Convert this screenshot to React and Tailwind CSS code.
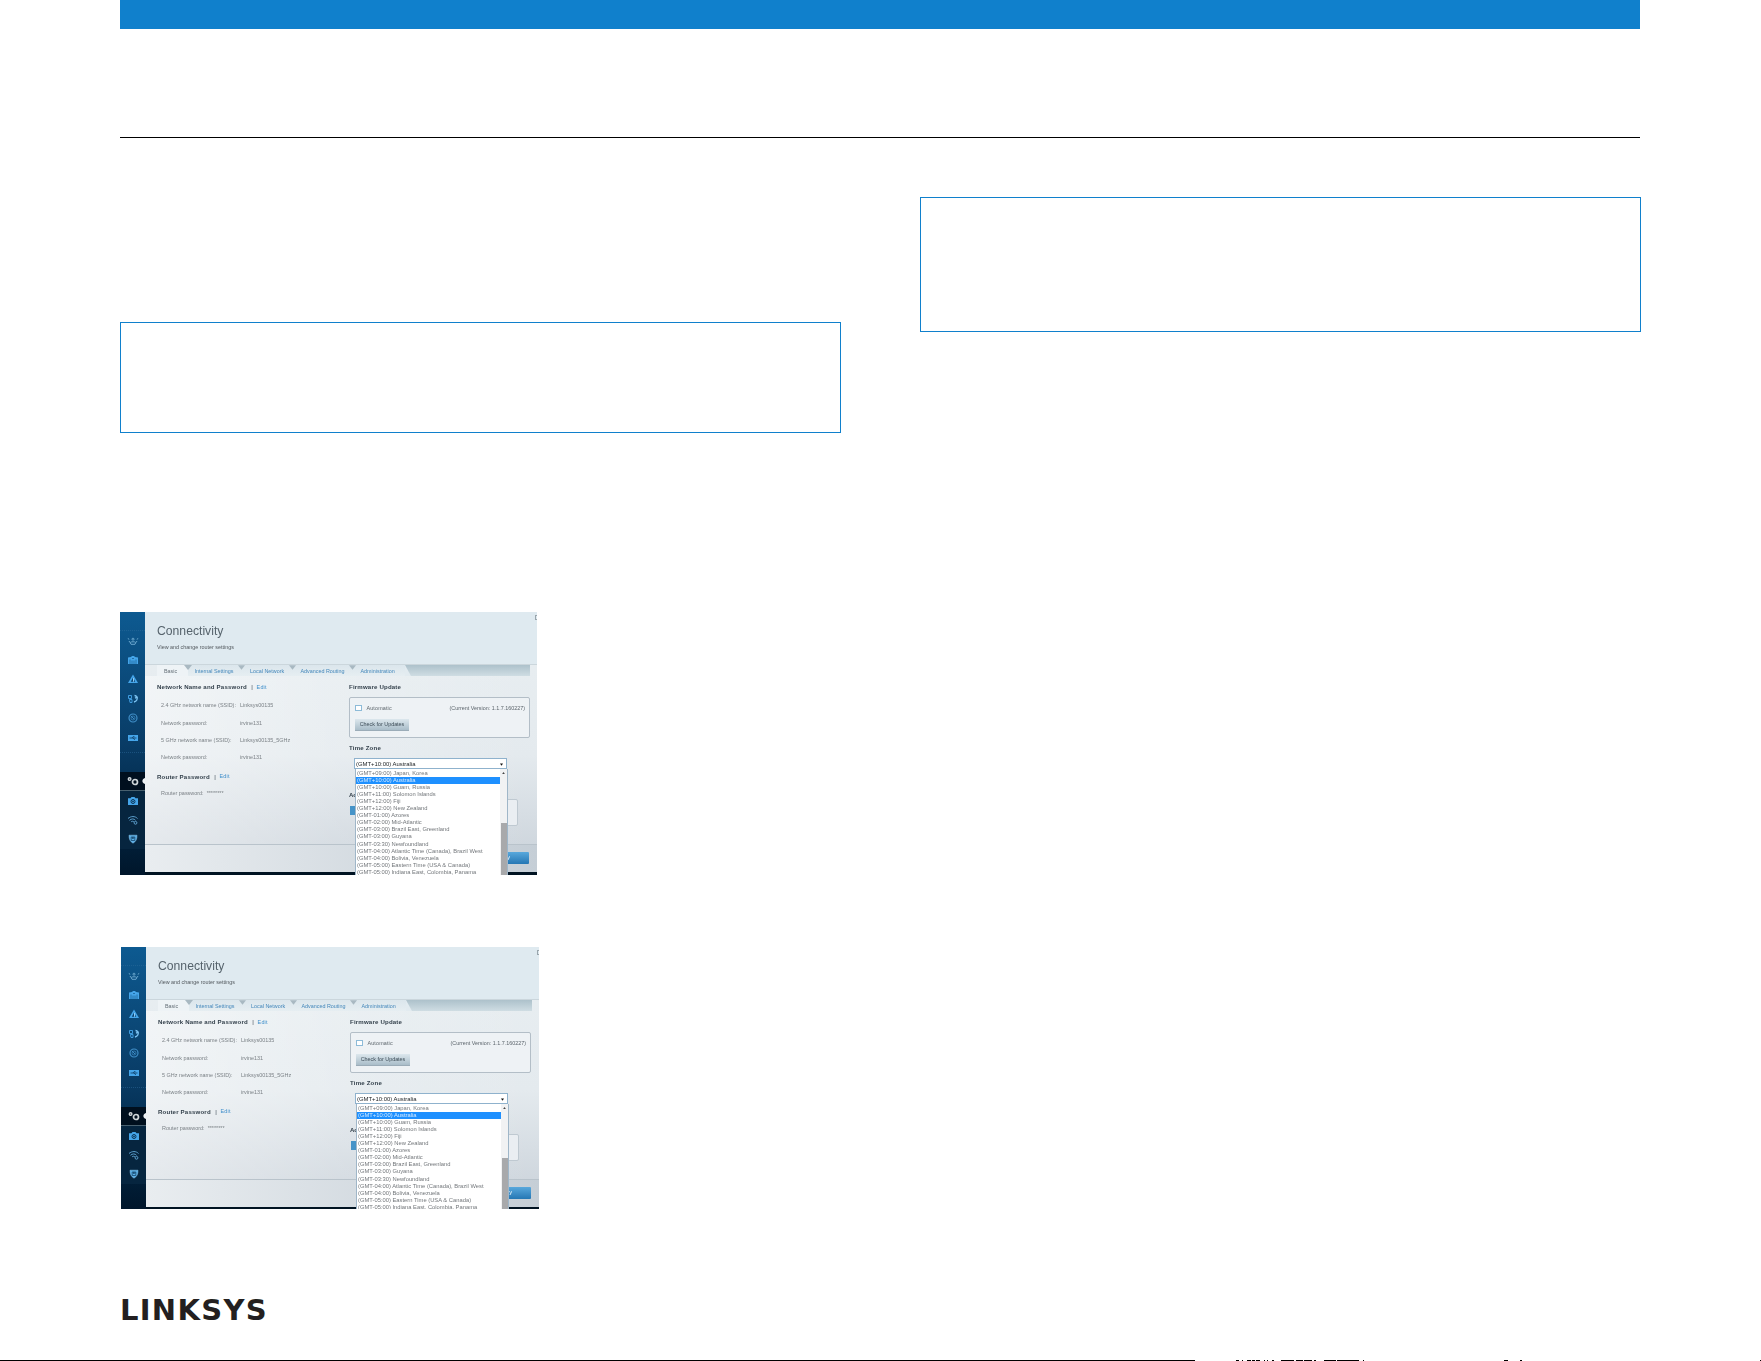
import React from 'react';

const tabs = [
  { label: 'Internal Settings', width: 'w-[54px]', pad: 'pl-[6.5px]' },
  { label: 'Local Network', width: 'w-[51px]', pad: 'pl-[8px]' },
  { label: 'Advanced Routing', width: 'w-[60px]', pad: 'pl-[7.5px]' },
  { label: 'Administration', width: 'w-[52px]', pad: 'pl-[7.5px]' }
];

const networkRows = [
  ['2.4 GHz network name (SSID):', 'Linksys00135'],
  ['Network password:', 'irvine131'],
  ['5 GHz network name (SSID):', 'Linksys00135_5GHz'],
  ['Network password:', 'irvine131']
];

const zones = [
  '(GMT+09:00) Japan, Korea',
  '(GMT+10:00) Australia',
  '(GMT+10:00) Guam, Russia',
  '(GMT+11:00) Solomon Islands',
  '(GMT+12:00) Fiji',
  '(GMT+12:00) New Zealand',
  '(GMT-01:00) Azores',
  '(GMT-02:00) Mid-Atlantic',
  '(GMT-03:00) Brazil East, Greenland',
  '(GMT-03:00) Guyana',
  '(GMT-03:30) Newfoundland',
  '(GMT-04:00) Atlantic Time (Canada), Brazil West',
  '(GMT-04:00) Bolivia, Venezuela',
  '(GMT-05:00) Eastern Time (USA & Canada)',
  '(GMT-05:00) Indiana East, Colombia, Panama'
];

const Icon = ({ children }) => (
  <svg viewBox="0 0 12 12" className="w-[12px] h-[12px]" fill="none" stroke="#45a5ea" strokeWidth="1">
    {children}
  </svg>
);

const topIcons = [
  // Device list
  <g stroke="#6aa6cd">
    <path d="M3.200 7.500c1-1 4.600-1 5.600 0L8 9.300H4z" />
    <circle cx="6" cy="4.200" r="1" />
    <path d="M.8 3.500l1.400.8M11.200 3.500l-1.400.8M2 6l1 1.500M10 6l-1 1.500" />
  </g>,
  // Guest access
  <g fill="#45a5ea" stroke="none">
    <path d="M1 3.500L4 3l1-1h2l1 1 3 .500V10H1z" />
    <path d="M3 5.500V10M9 5.500V10M5 4.500h2M5 6.500V10M7 6.500V10" stroke="#0c4a7b" strokeWidth=".6" />
  </g>,
  // Parental controls
  <g fill="#45a5ea" stroke="none">
    <path d="M6 1.500L11 10H1z" />
    <path d="M6 4.500L8.200 8.700H3.800z" fill="#0b426f" />
    <path d="M6.500 5v3.700" stroke="#8ccaf5" />
  </g>,
  // Media prioritization
  <g>
    <path d="M1.500 2.500h3v3h-3zM2.500 6.500h2.500v3H3z" strokeWidth=".9" />
    <path d="M7.500 2.500c2.500 0 2.500 2 .5 2.500M10 3.500c1 2.500-.5 5-3 5.500" stroke="#7cc3f2" strokeWidth="1.400" />
  </g>,
  // Speed test
  <g stroke="#3e8dc6">
    <circle cx="6" cy="6" r="4" strokeWidth="1.200" />
    <circle cx="6" cy="6" r="2" strokeWidth=".7" />
    <path d="M7 7L4 4" />
  </g>,
  // External storage
  <g>
    <path d="M1 3h10v6H1z" fill="#45a5ea" stroke="none" />
    <path d="M2.500 6h7M5 6l1-1.300h1.500M6 6l1 1.300h1" stroke="#0a3b63" strokeWidth=".8" />
  </g>
];

const bottomIcons = [
  // Troubleshooting
  <g>
    <path d="M1 3.300h2.500L4.500 2h3l1 1.300H11V10H1z" fill="#45a5ea" stroke="none" />
    <circle cx="6" cy="6.500" r="2" stroke="#0a3558" />
    <path d="M6 5.500v2M5 6.500h2" stroke="#0a3558" strokeWidth=".7" />
  </g>,
  // Wireless
  <g stroke="#5c9fcd">
    <path d="M1 4.500c3-2.600 7-2.600 9.500 0M2.500 6.300c2-1.800 4.500-1.800 6 0M4 8c1-1 2-1 3 0" />
    <circle cx="8.500" cy="8.800" r="1.400" />
  </g>,
  // Security
  <g>
    <path d="M2 2.200c3 0 5 0 8 0 0 4-1 6.300-4 8-3-1.700-4-4-4-8z" fill="#5aaee6" stroke="#86c4ec" strokeWidth=".5" />
    <path d="M4.200 4h3.600v3.500H4.200zM5.500 4v2M6.700 4v2" stroke="#0d3a5d" strokeWidth=".7" />
  </g>
];

const Sidebar = () => (
  <aside className="w-[24.5px] shrink-0 flex flex-col bg-gradient-to-b from-[#0d5a91] via-[#093c66] via-50% to-[#00162b]">
    <div className="h-[19px] shrink-0 border-b border-dotted border-[#2c6c9c]/50" />
    {topIcons.map((icon, i) => (
      <div key={i} className="h-[19.4px] pl-[1px] shrink-0 flex items-center justify-center">
        <Icon>{icon}</Icon>
      </div>
    ))}
    <div className="h-[6px] shrink-0 border-b border-dotted border-[#2c6c9c]/50" />
    <div className="h-[18.6px] shrink-0" />
    {/* Active entry with the notch pointing out of the panel */}
    <div className="h-[19px] pl-[1px] shrink-0 flex items-center justify-center relative bg-[#000f1e] border-b border-[#48606f]">
      <svg viewBox="0 0 12 12" className="w-[12px] h-[12px]" fill="none" stroke="#cfd6da">
        <circle cx="2.600" cy="4" r="1.300" strokeWidth="1.400" />
        <circle cx="8" cy="7" r="2.500" strokeWidth="1.700" />
      </svg>
      <svg viewBox="0 0 3 6" className="absolute right-0 top-[6px] w-[3px] h-[6px]">
        <path d="M3 0v6C-.5 5-.5 1 3 0z" fill="#eef2f5" />
      </svg>
    </div>
    <div className="bg-[#06253f] shrink-0">
      {bottomIcons.map((icon, i) => (
        <div key={i} className="h-[19.3px] pl-[1px] flex items-center justify-center">
          <Icon>{icon}</Icon>
        </div>
      ))}
    </div>
  </aside>
);

const TabBar = () => (
  <nav className="mr-[7px] ml-[12.5px] h-[11px] shrink-0 flex text-[5.4px] leading-[12px] text-[#4588bb] bg-gradient-to-b from-[#adc1cb] to-[#cfdde3]">
    <div className="relative w-[31px] bg-[#eef3f6] pl-[7px] text-[#667078]">
      Basic
      <svg viewBox="0 0 8 5" className="absolute right-[-4px] top-0 w-[8px] h-[5px] z-10">
        <path d="M0 0h8L4 5z" fill="#a9b9c2" />
      </svg>
    </div>
    {tabs.map((tab, i) => (
      <div key={tab.label} className={`relative ${tab.width} ${tab.pad} whitespace-nowrap bg-gradient-to-b from-[#dbe6ec] to-[#e6eef2]`}>
        {tab.label}
        {i < 3 ? (
          <svg viewBox="0 0 8 5" className="absolute right-[-3px] top-0 w-[7px] h-[5px] z-10">
            <path d="M0 0h8L4 5z" fill="#a9b9c2" />
          </svg>
        ) : (
          <svg viewBox="0 0 6 11" className="absolute right-[-6px] top-0 w-[6px] h-[11px]">
            <path d="M0 0l6 11H0z" fill="#e2ebf0" />
          </svg>
        )}
      </div>
    ))}
  </nav>
);

const Heading = ({ children, edit }) => (
  <h3 className="h-[20px] flex items-center text-[6.1px] tracking-[0.18px] font-bold text-[#34414c] whitespace-nowrap">
    {children}
    {edit && (
      <>
        <span className="font-normal ml-[4.5px] mr-[3.5px]">|</span>
        <span className="font-normal text-[5.4px] text-[#3f8fcb]">Edit</span>
      </>
    )}
  </h3>
);

const TimeZoneMenu = () => (
  <div className="absolute left-0 top-[10px] w-[153px] h-[106px] bg-white border-x border-[#9fb6c8] overflow-hidden z-20 flex">
    <ul className="flex-1 pt-[0.6px] text-[5.8px] leading-[7.1px] text-[#73777b] whitespace-nowrap">
      {zones.map((zone, i) => (
        <li key={zone} className={i === 1 ? 'pl-[1px] bg-[#1e90ff] text-[#d6ebff]' : 'pl-[1px]'}>
          {zone}
        </li>
      ))}
    </ul>
    <div className="w-[7px] bg-[#f1f2f3] flex flex-col items-center">
      <svg viewBox="0 0 4 3" className="mt-[3px] w-[3px] h-[2px]">
        <path d="M2 0l2 3H0z" fill="#444" />
      </svg>
      <div className="mt-[49px] w-[6px] flex-1 bg-[#a8a9ab]" />
    </div>
  </div>
);

const RouterPanel = ({ size }) => (
  <div className={`${size} flex overflow-hidden bg-[#001322] blur-[0.3px]`}>
    <Sidebar />
    <div className="flex-1 h-[260px] flex flex-col bg-gradient-to-b from-[#e9eff2] via-[#e4eaee] via-55% to-[#c9d1d9]">
      <header className="h-[53px] shrink-0 pl-[12.5px] flex bg-[#dfeaf0] border-b border-[#cbd6dc]">
        <div className="flex-1">
          <h2 className="mt-[12px] text-[12.2px] leading-[14px] text-[#56636c]">Connectivity</h2>
          <p className="mt-[6px] text-[5.4px] leading-[7px] text-[#53595e]">View and change router settings</p>
        </div>
        <div className="mt-[3px] w-[2px] h-[5px] border border-r-0 border-[#9aa6ad]" />
      </header>
      <TabBar />
      <div className="flex-1 flex pl-[12.5px] bg-gradient-to-r from-white/45 via-white/15 to-transparent">
        <div className="w-[192px] pt-[1px]">
          <Heading edit>Network Name and Password</Heading>
          <div className="text-[5.45px] text-[#7b8186]">
            {networkRows.map(([label, value], i) => (
              <div key={i} className="h-[17.1px] flex items-center pl-[4px]">
                <span className="w-[79px]">{label}</span>
                <span>{value}</span>
              </div>
            ))}
          </div>
          <div className="h-[1px]" />
          <Heading edit>Router Password</Heading>
          <div className="mt-[-2px] h-[17px] flex items-center pl-[4px] text-[5.45px] text-[#7b8186]">
            Router password: <span className="ml-[3px] pt-[1px]">********</span>
          </div>
        </div>
        <div className="w-[181px] pt-[1px]">
          <Heading>Firmware Update</Heading>
          <div className="h-[41px] px-[5px] rounded-[2px] border border-[#b3bec7] bg-[#eef2f5]">
            <div className="mt-[5px] h-[10px] flex items-center text-[5.4px] text-[#5c656c]">
              <span className="w-[7px] h-[6px] mr-[4.5px] border border-[#8dbbd8] bg-white" />
              <span className="tracking-[0.14px]">Automatic</span>
              <span className="ml-auto mr-[-1px]">(Current Version: 1.1.7.160227)</span>
            </div>
            <div className="mt-[6px] w-[54px] h-[12px] flex items-center justify-center text-[5.4px] text-[#3f4e59] bg-gradient-to-b from-[#dce7ed] to-[#a9bdc9] border-b border-[#9bacb8]">
              Check for Updates
            </div>
          </div>
          <Heading>Time Zone</Heading>
          <div className="relative ml-[5px] w-[153px] h-[11px] pt-[1px] flex items-center justify-between pl-[1px] pr-[3px] bg-white border border-[#8fb2cd] text-[5.9px] text-[#222629]">
            <span>(GMT+10:00) Australia</span>
            <svg viewBox="0 0 4 3" className="w-[3px] h-[3px]">
              <path d="M0 0h4L2 3z" fill="#111" />
            </svg>
            <TimeZoneMenu />
          </div>
          {/* Administration shortcuts, mostly hidden by the open menu */}
          <div className="mt-[20px] w-[169px] flex">
            <div className="w-[20px]">
              <div className="text-[6px] leading-[12px] font-bold text-[#34414c]">Ad</div>
              <div className="mt-[5px] ml-[1px] h-[9px] bg-[#4593c8]" />
            </div>
            <div className="flex-1 mt-[10px] h-[27px] rounded-[2px] border border-[#bfc9d1] bg-[#eaeef2]" />
          </div>
        </div>
      </div>
      <footer className="h-[28px] shrink-0 pr-[8px] flex items-center justify-end border-t border-[#b9c3cb] bg-gradient-to-r from-[#e9edf0] to-[#c5ced6]">
        <div className="mt-[-2px] w-[52px] h-[12px] flex items-center justify-center text-[5.6px] text-white bg-gradient-to-b from-[#58a8dc] to-[#2477b4] rounded-[1px]">
          Apply
        </div>
      </footer>
    </div>
  </div>
);

const App = () => {
  return (
    <div className="w-[1761px] h-[1361px] overflow-hidden bg-white flex flex-col font-['Liberation_Sans',sans-serif]">
      <div className="mx-[120px] w-[1520px] h-[29px] shrink-0 bg-[#1080cc]" />
      <div className="mx-[120px] mt-[108px] w-[1520px] h-[1px] shrink-0 bg-black" />

      <main className="h-[1161px] shrink-0 pl-[120px] flex gap-[79px]">
        <section className="w-[721px] pt-[184px]">
          <div className="h-[111px] border border-[#1080cc]" />
          <div className="mt-[179px]">
            <RouterPanel size="w-[417px] h-[263px]" />
          </div>
          <div className="mt-[72px] ml-[1px]">
            <RouterPanel size="w-[418px] h-[262px]" />
          </div>
        </section>
        <section className="w-[721px] pt-[59px]">
          <div className="h-[135px] border border-[#1080cc]" />
        </section>
      </main>

      <footer className="h-[61px] shrink-0 pl-[120px]">
        <span className="block h-[21px] leading-[23px] text-[29px] tracking-[1.3px] font-bold text-[#231f20] font-['DejaVu_Sans',sans-serif]">
          LINKSYS
        </span>
      </footer>

      <svg viewBox="0 0 1761 1" className="w-[1761px] h-px shrink-0" shapeRendering="crispEdges">
        <path
          d="M0 .5H1195M1236 .5h3M1242 .5h1M1247 .5h4M1252 .5h3M1256 .5h4M1264 .5h1M1267 .5h1M1272 .5h2M1281 .5h13M1296 .5h7M1304 .5h8M1314 .5h2M1324 .5h12M1337 .5h22M1363 .5h1M1504 .5h4M1520 .5h2M1760 .5h1"
          stroke="#000"
          strokeWidth="1"
        />
      </svg>
    </div>
  );
};

export default App;
